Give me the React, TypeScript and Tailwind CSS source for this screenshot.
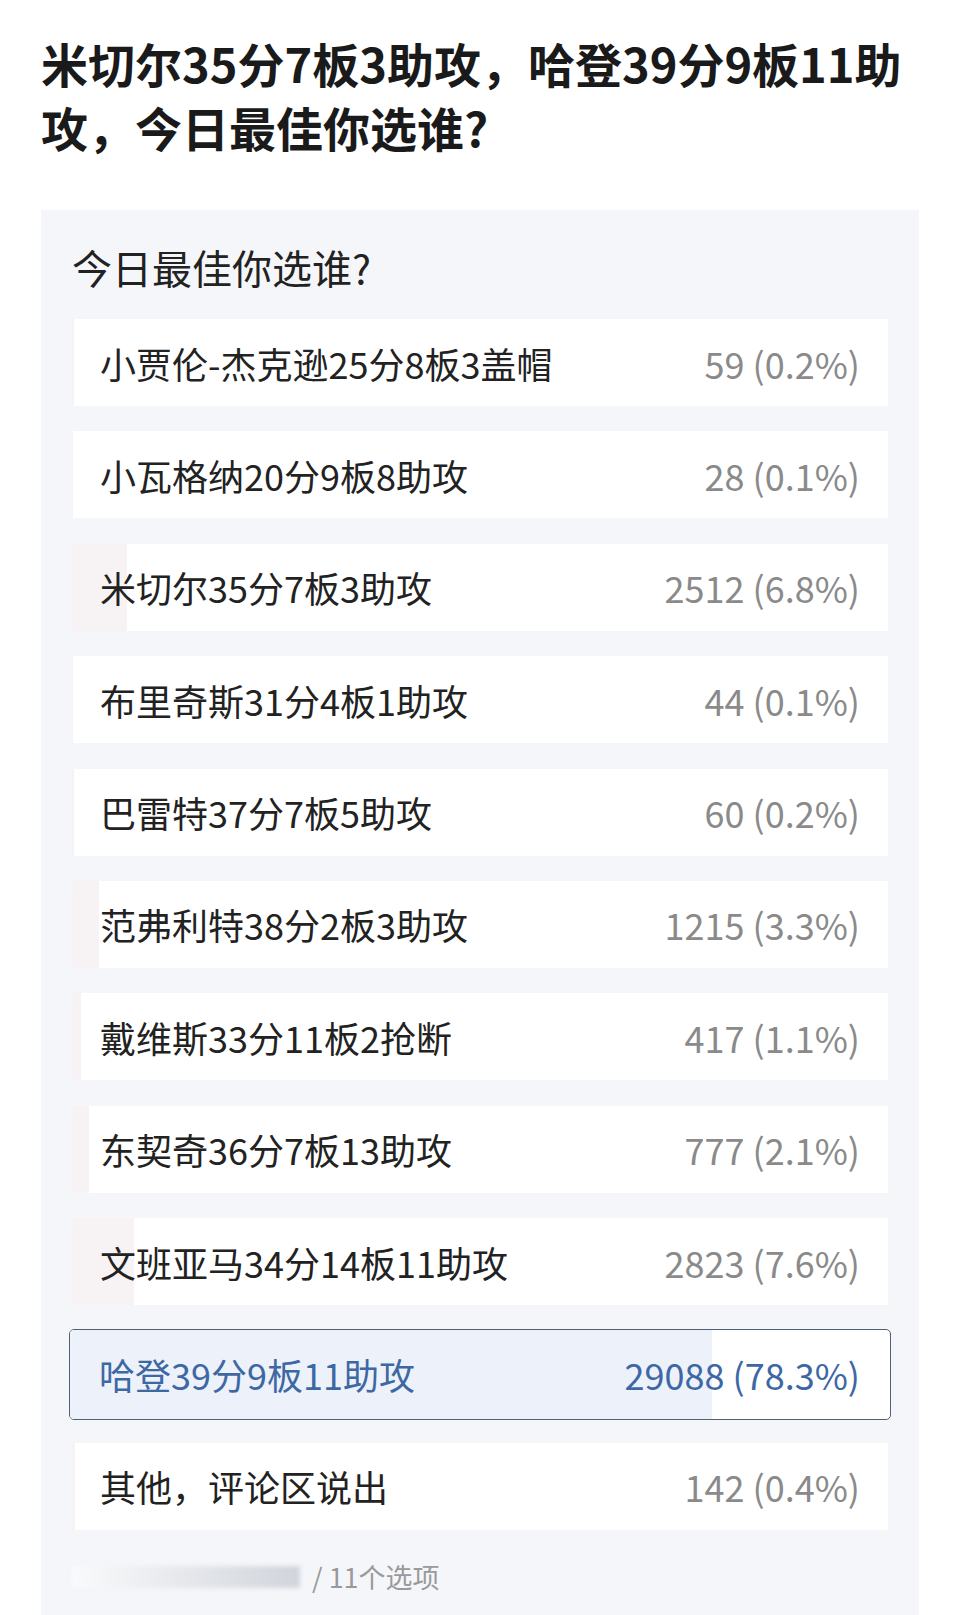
const options = [
  { label: '小贾伦-杰克逊25分8板3盖帽', votes: 59, pct: 0.2 },
  { label: '小瓦格纳20分9板8助攻', votes: 28, pct: 0.1 },
  { label: '米切尔35分7板3助攻', votes: 2512, pct: 6.8 },
  { label: '布里奇斯31分4板1助攻', votes: 44, pct: 0.1 },
  { label: '巴雷特37分7板5助攻', votes: 60, pct: 0.2 },
  { label: '范弗利特38分2板3助攻', votes: 1215, pct: 3.3 },
  { label: '戴维斯33分11板2抢断', votes: 417, pct: 1.1 },
  { label: '东契奇36分7板13助攻', votes: 777, pct: 2.1 },
  { label: '文班亚马34分14板11助攻', votes: 2823, pct: 7.6 },
  { label: '哈登39分9板11助攻', votes: 29088, pct: 78.3, selected: true },
  { label: '其他，评论区说出', votes: 142, pct: 0.4 },
];

const App = () => {
  return (
    <div className="w-[960px] h-[1615px] overflow-hidden bg-white font-['Noto_Sans_CJK_SC','Noto_Sans',sans-serif]">
      <h1 className="pl-[41px] pt-[31px] text-[47px] leading-[64px] font-bold text-[#1a1a1a]">
        米切尔35分7板3助攻，哈登39分9板11助
        <br />
        攻，今日最佳你选谁?
      </h1>

      <div className="mx-[41px] mt-[51px] bg-[#f5f6fa] px-[31px] pt-[33px] pb-[40px]">
        <h2 className="text-[40px] leading-[48px] text-[#222] mb-[28px]">今日最佳你选谁?</h2>

        <div className="flex flex-col gap-[25.4px]">
          {options.map((opt) =>
            opt.selected ? (
              <div
                key={opt.label}
                className="relative -mx-[3px] -my-[2px] h-[91px] rounded-[5px] border-[1.5px] border-[#4f6175] bg-white overflow-hidden"
              >
                <div className="absolute inset-y-0 left-0 bg-[#edf1fa]" style={{ width: `${opt.pct}%` }} />
                <div className="relative flex h-full items-center justify-between pl-[29px] pr-[30px] text-[36px] text-[#3d68a4]">
                  <span>{opt.label}</span>
                  <span>
                    {opt.votes} ({opt.pct}%)
                  </span>
                </div>
              </div>
            ) : (
              <div key={opt.label} className="relative h-[87px] bg-white">
                <div className="absolute inset-y-0 left-0 bg-[#f7f2f3]" style={{ width: `${opt.pct}%` }} />
                <div className="relative flex h-full items-center justify-between pl-[28px] pr-[28px] text-[36px]">
                  <span className="text-[#222]">{opt.label}</span>
                  <span className="text-[#8a8a8a]">
                    {opt.votes} ({opt.pct}%)
                  </span>
                </div>
              </div>
            )
          )}
        </div>

        <div className="mt-[31px] flex items-center gap-[12px] h-[32px]">
          <div className="h-[22px] w-[228px] bg-gradient-to-r from-gray-50 via-gray-200 to-gray-300 blur-[2px]" />
          <span className="text-[27px] text-[#9a9a9a]">/ 11个选项</span>
        </div>
      </div>
    </div>
  );
};

export default App;
